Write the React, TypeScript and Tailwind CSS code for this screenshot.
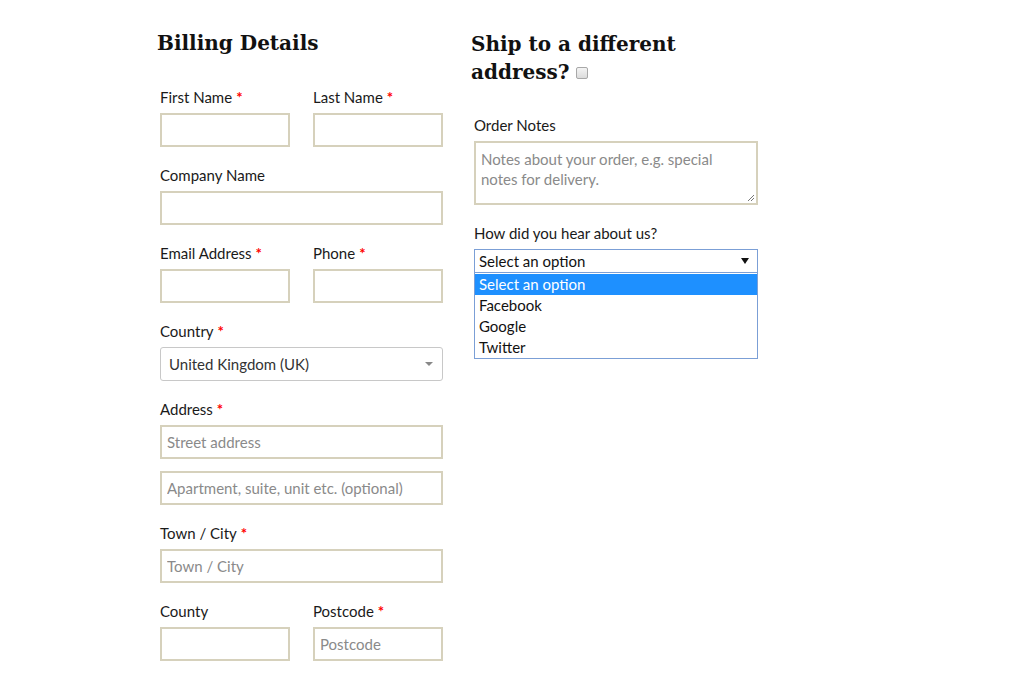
import React from 'react';

const body = { fontFamily: 'Lato, "Open Sans", sans-serif' };
const heading = { fontFamily: '"DejaVu Serif", serif' };

function Label({ text, required }: { text: string; required?: boolean }) {
  return (
    <label className="block h-[24px] leading-[24px] text-[15px] text-[#1a1a1a] mb-[4px]">
      {text}
      {required && <span className="text-[#ff0000] font-bold ml-[4px]">*</span>}
    </label>
  );
}

function TextInput({ placeholder }: { placeholder?: string }) {
  return (
    <input
      className="block w-full h-[34px] border-2 border-[#d6d1bc] bg-white px-[5px] text-[15px] text-[#222] placeholder:text-[#8a8a8a] outline-none"
      placeholder={placeholder}
      style={body}
    />
  );
}

function Field({ label, required, placeholder }: { label: string; required?: boolean; placeholder?: string }) {
  return (
    <div className="mb-[16px]">
      <Label text={label} required={required} />
      <TextInput placeholder={placeholder} />
    </div>
  );
}

export default function App() {
  return (
    <div className="min-h-[673px] bg-white pl-[157px] pt-[28px]" style={body}>
      <div className="flex gap-[25px]">
        {/* billing */}
        <div className="w-[289px]">
          <h3 className="text-[20px] font-bold leading-[30px] text-[#111] mb-[27px]" style={heading}>
            Billing Details
          </h3>
          <div className="pl-[3px] pr-[3px]">
            <div className="grid grid-cols-2 gap-x-[23px]">
              <Field label="First Name" required />
              <Field label="Last Name" required />
            </div>
            <Field label="Company Name" />
            <div className="grid grid-cols-2 gap-x-[23px]">
              <Field label="Email Address" required />
              <Field label="Phone" required />
            </div>
            <div className="mb-[16px]">
              <Label text="Country" required />
              <div className="flex items-center justify-between h-[34px] border border-[#c8c8c8] rounded-[3px] px-[8px] text-[15px] text-[#333]">
                <span>United Kingdom (UK)</span>
                <span className="w-0 h-0 border-l-[4px] border-r-[4px] border-t-[4px] border-l-transparent border-r-transparent border-t-[#888] mr-[1px]" />
              </div>
            </div>
            <div className="mb-[16px]">
              <Label text="Address" required />
              <TextInput placeholder="Street address" />
              <div className="h-[12px]" />
              <TextInput placeholder="Apartment, suite, unit etc. (optional)" />
            </div>
            <Field label="Town / City" required placeholder="Town / City" />
            <div className="grid grid-cols-2 gap-x-[23px]">
              <Field label="County" />
              <Field label="Postcode" required placeholder="Postcode" />
            </div>
          </div>
        </div>

        {/* shipping */}
        <div className="w-[290px]">
          <h3 className="text-[20px] font-bold leading-[28px] text-[#111] mb-[27px] pt-[2px] w-[220px]" style={heading}>
            Ship to a different address?{' '}
            <span className="inline-block align-middle w-[12px] h-[12px] border border-[#a8a8a8] rounded-[2px] bg-gradient-to-b from-[#f4f4f4] to-[#dcdcdc] relative top-[-1px]" />
          </h3>
          <div className="pl-[3px] pr-[3px]">
            <div className="mb-[16px]">
              <Label text="Order Notes" />
              <div className="relative">
                <textarea
                  className="block w-full h-[64px] border-2 border-[#d6d1bc] bg-white px-[5px] pt-[6px] text-[15px] leading-[20px] placeholder:text-[#8a8a8a] outline-none resize-none"
                  placeholder="Notes about your order, e.g. special notes for delivery."
                  style={body}
                />
                <svg className="absolute right-[3px] bottom-[3px]" width="8" height="8" viewBox="0 0 8 8">
                  <path d="M1 7 L7 1 M4 7 L7 4" stroke="#777" strokeWidth="1" />
                </svg>
              </div>
            </div>
            <Label text="How did you hear about us?" />
            <div className="relative">
              <div className="flex items-center justify-between h-[24px] border border-[#7b9fd6] bg-white pl-[4px] pr-[8px] text-[15px] text-[#111]">
                <span>Select an option</span>
                <span className="w-0 h-0 border-l-[4px] border-r-[4px] border-t-[6px] border-l-transparent border-r-transparent border-t-[#111]" />
              </div>
              <div className="absolute left-0 right-0 top-[24px] border border-[#7b9fd6] border-t-0 bg-white pt-[1px] text-[15px] leading-[21px] text-[#111]">
                <div className="bg-[#1e90ff] text-white px-[4px]">Select an option</div>
                <div className="px-[4px]">Facebook</div>
                <div className="px-[4px]">Google</div>
                <div className="px-[4px]">Twitter</div>
              </div>
            </div>
          </div>
        </div>
      </div>
    </div>
  );
}
